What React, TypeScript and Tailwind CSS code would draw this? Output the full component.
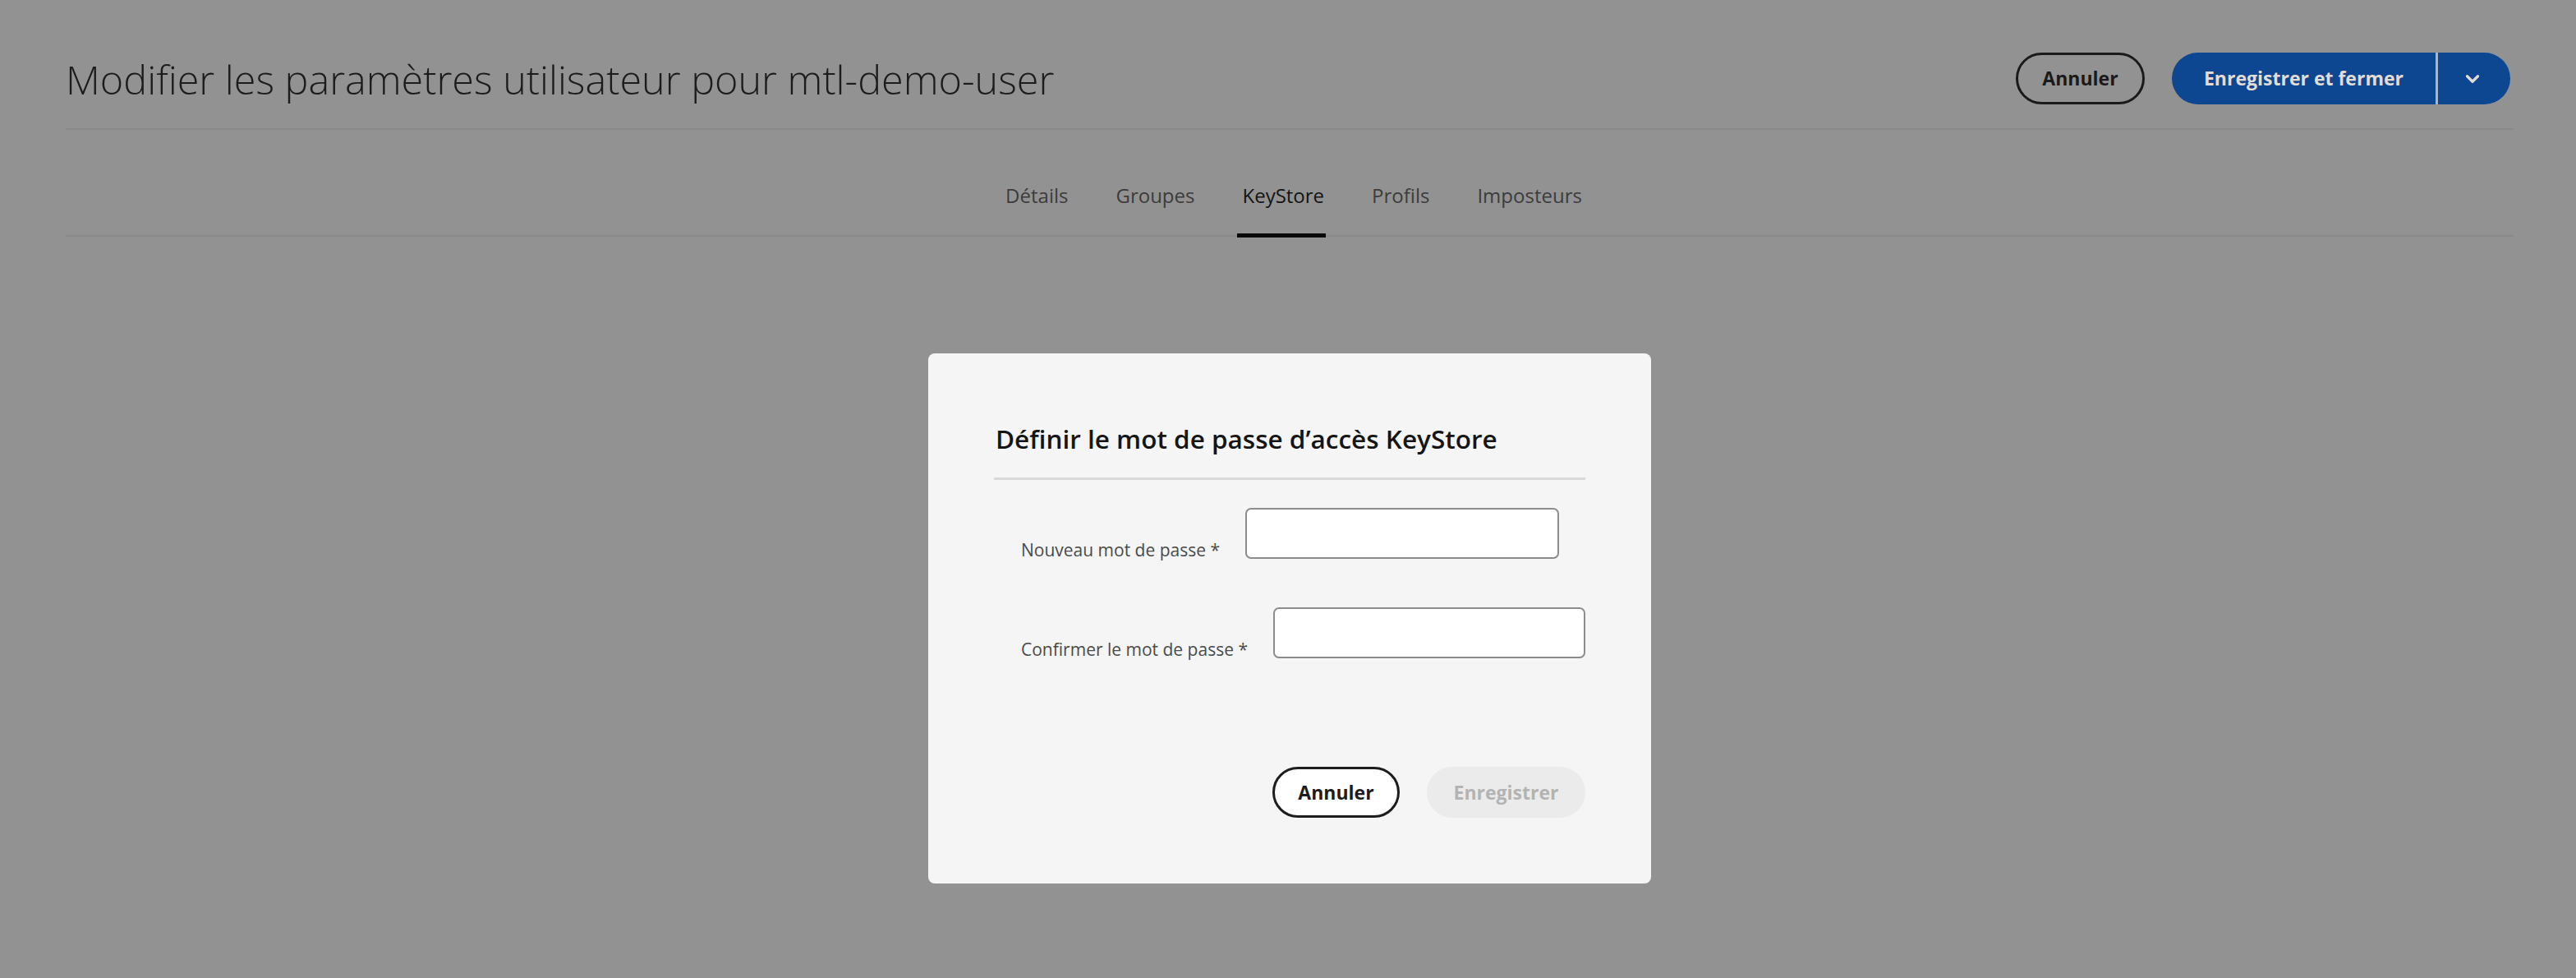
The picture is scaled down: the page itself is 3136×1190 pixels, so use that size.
import React from 'react';
import { ChevronDown } from 'lucide-react';

const tabs = ['Détails', 'Groupes', 'KeyStore', 'Profils', 'Imposteurs'];

const PasswordRow: React.FC<{ label: string; className?: string }> = ({ label, className = '' }) => (
    <div className={`flex items-end gap-[31px] pl-[33px] ${className}`}>
        <label className="text-[21px] leading-[21px] text-[#4a4a4a] whitespace-nowrap">{label}</label>
        <input
            type="password"
            className="w-[382px] h-[62px] rounded-[7px] border-2 border-[#8c8c8c] bg-white outline-none"
        />
    </div>
);

const KeyStoreDialog: React.FC = () => {
    return (
        <div className="absolute left-[1130px] top-[430px] w-[880px] rounded-[8px] bg-[#f5f5f5] p-[80px]">
            <h2 className="pl-[2px] text-[31.5px] leading-[48px] font-semibold text-[#151515]">
                Définir le mot de passe d’accès KeyStore
            </h2>
            <div className="mt-[23px] border-b-[3px] border-[#d8d8d8]" />
            <PasswordRow label="Nouveau mot de passe *" className="mt-[34px]" />
            <PasswordRow label="Confirmer le mot de passe *" className="mt-[59px]" />
            <div className="mt-[132px] flex justify-end gap-[33px]">
                <button className="w-[155px] h-[62px] rounded-full border-[3px] border-[#1d1d1d] bg-white text-[23px] font-bold text-[#1d1d1d]">
                    Annuler
                </button>
                <button disabled className="w-[193px] h-[62px] rounded-full bg-[#ebebeb] text-[23px] font-bold text-[#b3b3b3]">
                    Enregistrer
                </button>
            </div>
        </div>
    );
};

export default function App() {
    return (
        <div className="relative w-full h-[1190px] overflow-hidden bg-[#929292] font-['Open_Sans',sans-serif]">
            <div className="pl-[80px] pr-[76px]">
                {/* Header */}
                <div className="flex items-center justify-between pt-[64px] pb-[29px] border-b-2 border-[#898989]">
                    <h1 className="text-[48.5px] leading-[60px] font-light text-[#1c1c1c] whitespace-nowrap">
                        Modifier les paramètres utilisateur pour mtl-demo-user
                    </h1>
                    <div className="flex items-center gap-[33px] mr-[4px]">
                        <button className="w-[157px] h-[63px] rounded-full border-[3px] border-[#1a1a1a] text-[23px] font-bold text-[#1a1a1a]">
                            Annuler
                        </button>
                        <div className="flex h-[63px] rounded-full bg-[#0d4691] overflow-hidden">
                            <button className="w-[321px] h-full text-[23px] font-bold text-[#e2ddd4]">
                                Enregistrer et fermer
                            </button>
                            <div className="w-[3px] h-full bg-[#b9b3a8]" />
                            <button className="w-[88px] h-full flex items-center justify-center pr-[4px]">
                                <ChevronDown size={26} strokeWidth={3} className="text-[#e2ddd4]" />
                            </button>
                        </div>
                    </div>
                </div>

                {/* Tabs */}
                <div className="flex justify-center gap-[58px] pt-[62px] pl-[10px] border-b-2 border-[#898989]">
                    {tabs.map((tab) => (
                        <div key={tab} className="relative pb-[30px]">
                            <span
                                className={`text-[24px] leading-[36px] ${tab === 'KeyStore' ? 'text-[#141414]' : 'text-[#3c3c3c]'}`}
                            >
                                {tab}
                            </span>
                            {tab === 'KeyStore' && (
                                <div className="absolute -left-[6px] -right-[2px] -bottom-[3px] h-[5px] bg-[#0a0a0a]" />
                            )}
                        </div>
                    ))}
                </div>
            </div>

            <KeyStoreDialog />
        </div>
    );
}
